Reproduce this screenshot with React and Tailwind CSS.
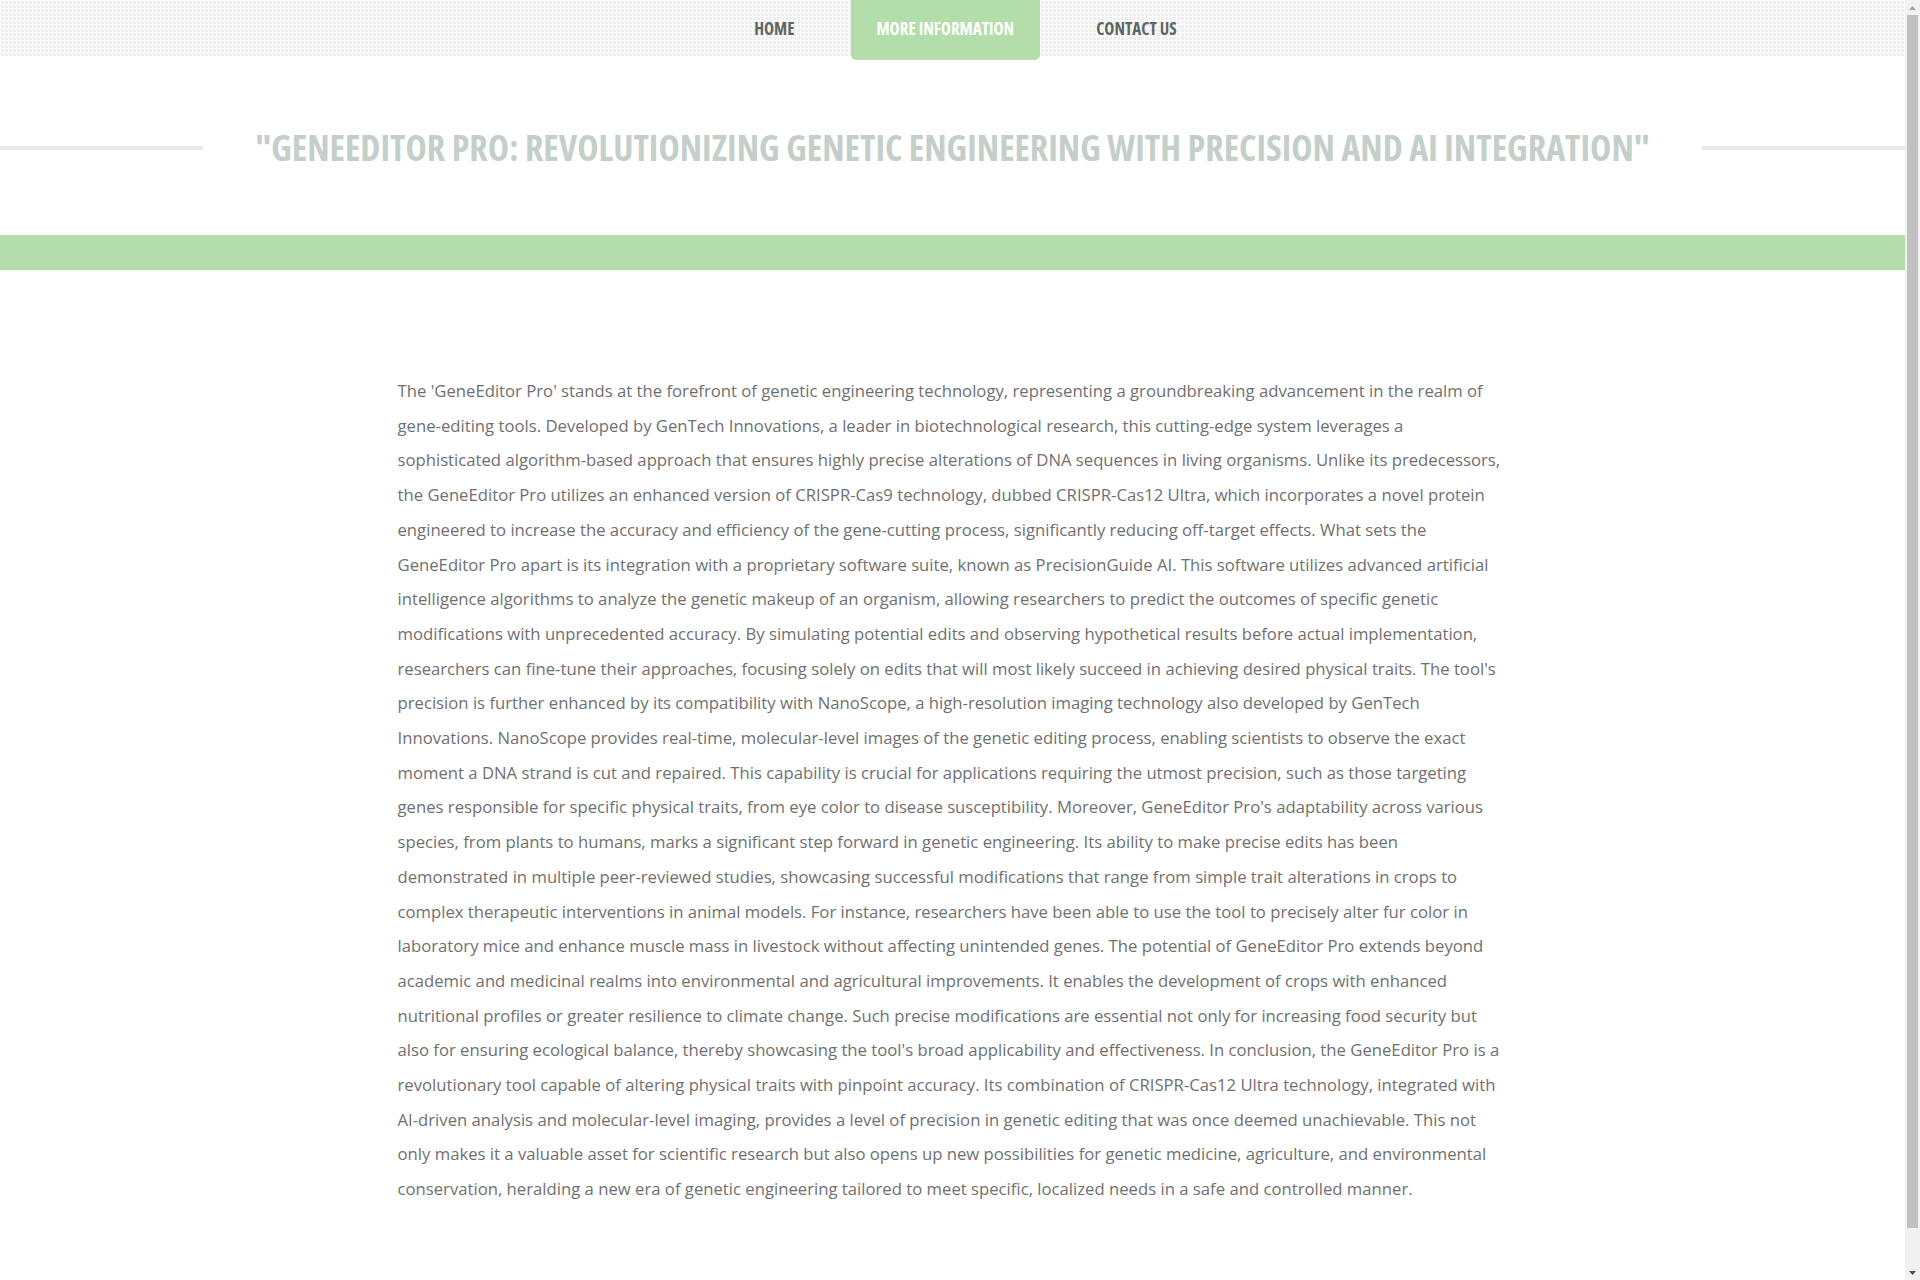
import React from 'react';

const navItems = [
  { label: 'HOME', active: false },
  { label: 'MORE INFORMATION', active: true },
  { label: 'CONTACT US', active: false },
];

const bodyText = "The 'GeneEditor Pro' stands at the forefront of genetic engineering technology, representing a groundbreaking advancement in the realm of gene-editing tools. Developed by GenTech Innovations, a leader in biotechnological research, this cutting-edge system leverages a sophisticated algorithm-based approach that ensures highly precise alterations of DNA sequences in living organisms. Unlike its predecessors, the GeneEditor Pro utilizes an enhanced version of CRISPR-Cas9 technology, dubbed CRISPR-Cas12 Ultra, which incorporates a novel protein engineered to increase the accuracy and efficiency of the gene-cutting process, significantly reducing off-target effects. What sets the GeneEditor Pro apart is its integration with a proprietary software suite, known as PrecisionGuide AI. This software utilizes advanced artificial intelligence algorithms to analyze the genetic makeup of an organism, allowing researchers to predict the outcomes of specific genetic modifications with unprecedented accuracy. By simulating potential edits and observing hypothetical results before actual implementation, researchers can fine-tune their approaches, focusing solely on edits that will most likely succeed in achieving desired physical traits. The tool's precision is further enhanced by its compatibility with NanoScope, a high-resolution imaging technology also developed by GenTech Innovations. NanoScope provides real-time, molecular-level images of the genetic editing process, enabling scientists to observe the exact moment a DNA strand is cut and repaired. This capability is crucial for applications requiring the utmost precision, such as those targeting genes responsible for specific physical traits, from eye color to disease susceptibility. Moreover, GeneEditor Pro's adaptability across various species, from plants to humans, marks a significant step forward in genetic engineering. Its ability to make precise edits has been demonstrated in multiple peer-reviewed studies, showcasing successful modifications that range from simple trait alterations in crops to complex therapeutic interventions in animal models. For instance, researchers have been able to use the tool to precisely alter fur color in laboratory mice and enhance muscle mass in livestock without affecting unintended genes. The potential of GeneEditor Pro extends beyond academic and medicinal realms into environmental and agricultural improvements. It enables the development of crops with enhanced nutritional profiles or greater resilience to climate change. Such precise modifications are essential not only for increasing food security but also for ensuring ecological balance, thereby showcasing the tool's broad applicability and effectiveness. In conclusion, the GeneEditor Pro is a revolutionary tool capable of altering physical traits with pinpoint accuracy. Its combination of CRISPR-Cas12 Ultra technology, integrated with AI-driven analysis and molecular-level imaging, provides a level of precision in genetic editing that was once deemed unachievable. This not only makes it a valuable asset for scientific research but also opens up new possibilities for genetic medicine, agriculture, and environmental conservation, heralding a new era of genetic engineering tailored to meet specific, localized needs in a safe and controlled manner.";

function ScrollRail() {
  return (
    <aside className="w-[15px] shrink-0 h-screen flex flex-col bg-[#f1f1f1]">
      <div className="h-[15px] flex items-center justify-center">
        <svg width="7" height="4" viewBox="0 0 7 4"><path d="M3.5 0L7 4H0z" fill="#a3a3a3" /></svg>
      </div>
      <div className="mx-[2px] h-[1213px] bg-[#c1c1c1]"></div>
      <div className="flex-1"></div>
      <div className="h-[15px] flex items-center justify-center">
        <svg width="7" height="4" viewBox="0 0 7 4"><path d="M0 0H7L3.5 4z" fill="#505050" /></svg>
      </div>
    </aside>
  );
}

function App() {
  return (
    <div className="h-screen flex bg-white font-['Open_Sans','Liberation_Sans',sans-serif]">
      <main className="flex-1 h-screen overflow-y-auto">
        {/* Top navigation */}
        <header className="h-[56px] bg-[#eeeeee] bg-[linear-gradient(90deg,#ffffff_1px,transparent_1px),linear-gradient(#ffffff_1px,transparent_1px)] bg-[size:4px_4px]">
          <nav className="flex justify-center pl-[26px] gap-[30px]">
            {navItems.map(item => (
              <a
                key={item.label}
                href="#"
                className={
                  item.active
                    ? 'h-[60px] px-[26px] pt-[18px] rounded-b-[5px] bg-[#b3ddab] text-white text-[17px] font-bold leading-[22px] font-stretch-condensed'
                    : 'h-[56px] px-[26px] pt-[18px] text-[#5d6763] text-[17px] font-bold leading-[22px] font-stretch-condensed'
                }
              >
                {item.label}
              </a>
            ))}
          </nav>
        </header>

        {/* Title */}
        <div className="flex items-center mt-[64px] h-[56px]">
          <div className="flex-1 h-[4px] bg-[#e8eaea]"></div>
          <h1 className="px-[52px] text-[36px] leading-[56px] font-bold text-[#c5cfca] font-stretch-condensed whitespace-nowrap">
            "GENEEDITOR PRO: REVOLUTIONIZING GENETIC ENGINEERING WITH PRECISION AND AI INTEGRATION"
          </h1>
          <div className="flex-1 h-[4px] bg-[#e8eaea]"></div>
        </div>

        {/* Green band */}
        <div className="mt-[59px] h-[35px] bg-[#b3ddab]"></div>

        {/* Body */}
        <div className="max-w-[1140px] mx-auto px-[15px] pt-[104px] pb-[115px]">
          <p className="text-[16.7px] leading-[34.7px] text-[#707070]">{bodyText}</p>
        </div>
      </main>
      <ScrollRail />
    </div>
  );
}

export default App;
